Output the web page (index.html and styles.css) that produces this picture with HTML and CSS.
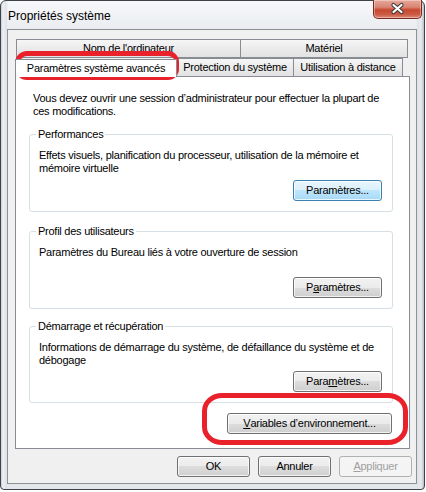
FILE: index.html
```html
<!DOCTYPE html>
<html lang="fr">
<head>
<meta charset="utf-8">
<title>Propriétés système</title>
<link rel="stylesheet" href="styles.css">
</head>
<body>
<div class="window">
  <div class="titlebar">
    <span class="title">Propriétés système</span>
    <div class="close">
      <svg width="47" height="18" viewBox="0 0 47 18">
        <path d="M19.5 5 L27.5 12 M27.5 5 L19.5 12" stroke="#3a3a3a" stroke-width="4.2" stroke-linecap="round"/>
        <path d="M19.5 5 L27.5 12 M27.5 5 L19.5 12" stroke="#ffffff" stroke-width="2.2" stroke-linecap="round"/>
      </svg>
    </div>
  </div>
  <div class="client">
    <div class="tabs">
      <div class="tabrow back">
        <div class="tab t-nom">Nom de l'ordinateur</div>
        <div class="tab t-mat">Matériel</div>
      </div>
      <div class="tabrow front">
        <div class="tab selected t-param">Paramètres système avancés</div>
        <div class="tab t-prot">Protection du système</div>
        <div class="tab t-util">Utilisation à distance</div>
      </div>
    </div>
    <div class="panel">
      <p class="intro">Vous devez ouvrir une session d’administrateur pour effectuer la plupart de ces modifications.</p>
      <div class="group g1">
        <span class="group-title">Performances</span>
        <p class="desc">Effets visuels, planification du processeur, utilisation de la mémoire et mémoire virtuelle</p>
        <button class="btn btn-default btn-param">Paramètres...</button>
      </div>
      <div class="group g2">
        <span class="group-title">Profil des utilisateurs</span>
        <p class="desc">Paramètres du Bureau liés à votre ouverture de session</p>
        <button class="btn btn-param">P<u>a</u>ramètres...</button>
      </div>
      <div class="group g3">
        <span class="group-title">Démarrage et récupération</span>
        <p class="desc">Informations de démarrage du système, de défaillance du système et de débogage</p>
        <button class="btn btn-param">Para<u>m</u>ètres...</button>
      </div>
      <button class="btn btn-env"><u>V</u>ariables d’environnement...</button>
    </div>
    <div class="actions">
      <button class="btn btn-action">OK</button>
      <button class="btn btn-action">Annuler</button>
      <button class="btn btn-action" disabled><u>A</u>ppliquer</button>
    </div>
  </div>
  <div class="mark mark-tab"></div>
  <div class="mark mark-env"></div>
</div>
</body>
</html>
```

FILE: styles.css
```css
* { box-sizing: border-box; }

html, body {
  margin: 0;
  padding: 0;
  background: #ffffff;
}

body {
  font-family: "Liberation Sans", Arial, sans-serif;
  font-size: 11px;
  line-height: 13px;
  letter-spacing: -0.25px;
  color: #000;
}

.window {
  position: relative;
  width: 425px;
  height: 490px;
  border: 1px solid #3f4246;
  border-radius: 6px 6px 4px 4px;
  padding: 0 7px 5px 6px;
  background:
    linear-gradient(90deg, #c9ced4 0px, #eef1f4 2px, #dfe3e8 5px, rgba(223,227,232,0) 7px),
    linear-gradient(270deg, #b9bec4 0px, #e9ecef 3px, #dfe3e8 6px, rgba(223,227,232,0) 8px),
    linear-gradient(#f7f8fa 0px, #e9ecf0 30px, #e3e7eb 100%);
  display: flex;
  flex-direction: column;
}

.titlebar {
  height: 28px;
  display: flex;
  justify-content: space-between;
  align-items: flex-start;
}

.title {
  font-family: "Liberation Sans", Arial, sans-serif;
  font-size: 12px;
  line-height: 16px;
  letter-spacing: 0;
  padding-top: 7px;
  padding-left: 1px;
  color: #000;
}

.close {
  width: 49px;
  height: 19px;
  margin-top: -1px;
  margin-right: -5px;
  border: 1px solid #7a2a22;
  border-top: none;
  border-radius: 0 0 5px 5px;
  background: linear-gradient(#e7a89c 0%, #d98573 40%, #c8472f 55%, #cc5a45 80%, #df8a78 100%);
  box-shadow: inset 0 0 0 1px rgba(255,255,255,0.35);
}

.close svg { display: block; }

.client {
  height: 455px;
  border: 1px solid #8d9297;
  background: #f0f0f0;
  padding: 9px 6px 7px 7px;
  display: flex;
  flex-direction: column;
}

/* Tabs */
.tabs {
  display: flex;
  flex-direction: column;
}

.tabrow {
  display: flex;
}

.tabrow.back {
  margin-left: 1px;
  height: 19px;
}

.tabrow.front {
  margin-top: -2px;
  height: 20px;
  align-items: flex-end;
}

.tab {
  border: 1px solid #898c95;
  background: linear-gradient(#f6f6f6, #ebebeb 50%, #e2e2e2 100%);
  text-align: center;
  white-space: nowrap;
  flex: none;
}

.tabrow.back .tab {
  height: 19px;
  line-height: 17px;
}

.tabrow.front .tab {
  height: 18px;
  line-height: 17px;
  border-bottom: none;
}

.tab + .tab { margin-left: -1px; }

.tab.selected {
  position: relative;
  z-index: 2;
  height: 21px;
  margin-bottom: -1px;
  background: #ffffff;
  line-height: 17px;
  padding-bottom: 2px;
}

.t-nom { width: 225px; }
.t-mat { width: 168px; }
.t-param { width: 162px; }
.t-prot { width: 118px; }
.t-util { width: 110px; }

/* Panel */
.panel {
  height: 373px;
  border: 1px solid #898c95;
  background: #ffffff;
  padding: 15px 16px 14px 13px;
  display: flex;
  flex-direction: column;
}

.intro {
  margin: 0 0 0 4px;
  height: 26px;
}

.group {
  border: 1px solid #d5dfe5;
  border-radius: 3px;
  padding: 0 10px 10px 9px;
  display: flex;
  flex-direction: column;
}

.g1 { margin-top: 16px; height: 78px; }
.g2 { margin-top: 19px; height: 78px; }
.g3 { margin-top: 17px; height: 77px; }

.group-title {
  align-self: flex-start;
  margin: -7px 0 0 -3px;
  padding: 0 2px;
  background: #ffffff;
  line-height: 13px;
}

.desc {
  margin: 8px -4px 0 0;
}

/* Buttons */
.btn {
  height: 21px;
  border: 1px solid #707070;
  border-radius: 3px;
  background: linear-gradient(#f2f2f2 0%, #ebebeb 50%, #dddddd 50%, #cfcfcf 100%);
  box-shadow: inset 0 0 0 1px rgba(255,255,255,0.75);
  font-family: inherit;
  font-size: 11px;
  line-height: 13px;
  letter-spacing: inherit;
  color: #000;
  padding: 0;
  display: flex;
  align-items: center;
  justify-content: center;
  flex: none;
}

.btn u { text-decoration: underline; text-underline-offset: 1px; }

.btn-default {
  border-color: #3c7fb1;
  background: linear-gradient(#eaf6fd 0%, #d9f0fc 50%, #bee6fd 50%, #a7d9f5 100%);
}

.btn:disabled {
  border-color: #adb2b5;
  background: #f4f4f4;
  box-shadow: none;
  color: #a0a0a0;
}

.btn-param {
  width: 89px;
  margin-top: auto;
  align-self: flex-end;
}

.btn-env {
  width: 165px;
  margin-top: 10px;
  margin-right: 1px;
  align-self: flex-end;
}

.actions {
  margin-top: 7px;
  display: flex;
  justify-content: flex-end;
  gap: 8px;
  margin-right: -2px;
}

.btn-action { width: 73px; }

/* Red annotation marks drawn over the dialog */
.mark {
  position: absolute;
  border: 4px solid #e8212b;
  pointer-events: none;
}

.mark-tab {
  left: 14px;
  top: 50px;
  width: 164px;
  height: 29px;
  border-radius: 12px 11px 11px 12px;
  border-width: 5px 4px 4px 5px;
}

.mark-env {
  left: 201px;
  top: 392px;
  width: 206px;
  height: 52px;
  border-radius: 20px / 18px;
  border-width: 5px;
}
```
